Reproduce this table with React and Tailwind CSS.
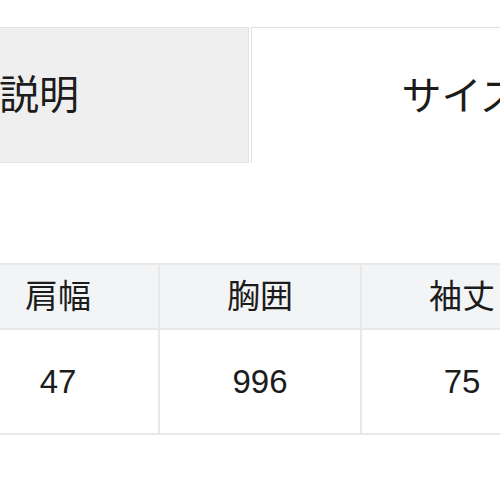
const FONT = '"Liberation Sans", "Noto Sans CJK JP", sans-serif';

const COLUMNS = [
  { label: '肩幅', value: '47' },
  { label: '胸囲', value: '996' },
  { label: '袖丈', value: '75' },
];

export default function App() {
  return (
    <div className="h-[500px] w-[500px] overflow-hidden bg-white text-[#1c1c1c]" style={{ fontFamily: FONT }}>
      {/* tabs */}
      <div className="ml-[-171px] mt-[27px] flex gap-[2px]">
        <div className="flex h-[136px] w-[420px] shrink-0 items-center justify-center border border-[#e2e2e2] bg-[#efefef] text-[40px] leading-none">
          説明
        </div>
        <div className="flex h-[136px] w-[420px] shrink-0 items-center justify-center border-x border-t border-[#e0e0e0] bg-white text-[40px] leading-none">
          サイズ
        </div>
      </div>

      {/* size table */}
      <div className="ml-[-44px] mt-[100px] grid w-[608px] grid-cols-[202px_202px_202px] border-l-2 border-t-2 border-[#e8e8e8] text-[33px] leading-none">
        {COLUMNS.map((col) => (
          <div
            key={col.label}
            className="flex h-[65px] items-center justify-center border-b-2 border-r-2 border-[#e8e8e8] bg-[#f3f4f6]"
          >
            {col.label}
          </div>
        ))}
        {COLUMNS.map((col) => (
          <div
            key={col.label + '-v'}
            className="flex h-[105px] items-center justify-center border-b-2 border-r-2 border-[#e8e8e8]"
          >
            {col.value}
          </div>
        ))}
      </div>
    </div>
  );
}
